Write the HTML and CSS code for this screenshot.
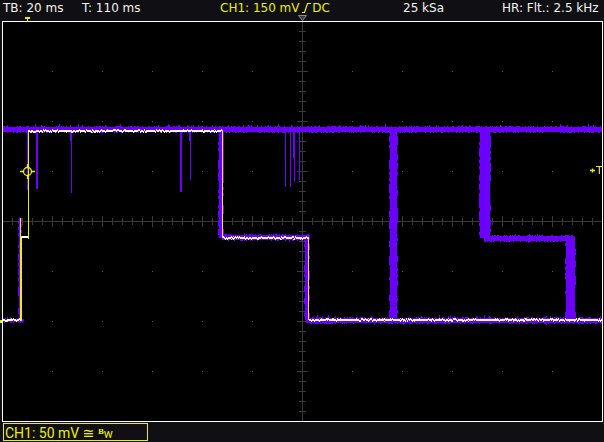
FILE: index.html
```html
<!DOCTYPE html>
<html lang="en">
<head>
    <meta charset="UTF-8">
    <title>Scope</title>
    <link rel="stylesheet" href="styles.css">
</head>
<body>
    <div class="screen">
        <div class="topbar">
            <span>TB: 20 ms</span>
            <span>T: 110 ms</span>
            <span class="ch">CH1: 150 mV <svg class="edge" width="9" height="10" viewBox="0 0 9 10"><polyline points="0,9.5 2.5,9.5 5.5,0.5 9,0.5" fill="none" stroke="#eeee00" stroke-width="1.2"/></svg>DC</span>
            <span>25 kSa</span>
            <span>HR: Flt.: 2.5 kHz</span>
        </div>

        <!-- trigger position and screen centre markers -->
        <svg class="mark-tpos" width="6" height="5" viewBox="0 0 6 5"><path d="M0 0h5v2h-2v3h-1v-3h-2z" fill="#eeee00"/></svg>
        <svg class="mark-center" width="9" height="6" viewBox="0 0 9 6"><path d="M0.5 0.5h8l-4 5z" fill="#3c3c3c" stroke="#8a8a8a"/></svg>

        <div class="graticule">
            <canvas id="scope" width="599" height="399"></canvas>
        </div>

        <!-- trigger level crosshair, trigger marker, ground marker -->
        <svg class="mark-level" width="17" height="17" viewBox="0 0 17 17">
            <circle cx="8.5" cy="8.5" r="4" fill="none" stroke="#eeee00" stroke-width="1.3"/>
            <path d="M1 8.5h3.5M12.5 8.5h3.5M8.5 1v3.5M8.5 12.5v3.5" stroke="#eeee00" stroke-width="1.3"/>
        </svg>
        <div class="mark-trig"><svg width="5" height="5" viewBox="0 0 5 5"><path d="M0 2.5h5M2.5 0.5v4" stroke="#eeee00" stroke-width="1.4"/></svg>T</div>
        <div class="mark-gnd"></div>

        <div class="bottombar">
            <div class="chbox">CH1: 50 mV &#8773; <span class="bw"><sup>B</sup>w</span></div>
        </div>
    </div>

    <script src="script.js"></script>
</body>
</html>
```

FILE: styles.css
```css
body {
    margin: 0;
    background: #100f13;
    font-family: "DejaVu Sans", sans-serif;
}
.screen {
    position: relative;
    width: 604px;
    height: 442px;
    background: #100f13;
}
.topbar {
    display: grid;
    grid-template-columns: 79px 138px 183px 99px 1fr;
    height: 21px;
    box-sizing: border-box;
    padding: 1px 0 0 3px;
    font-size: 12px;
    line-height: 14px;
    color: #f2f2f2;
    white-space: nowrap;
}
.ch {
    color: #eeee00;
}
.edge {
    vertical-align: -1px;
    margin-left: -1px;
    margin-right: 1px;
}
.graticule {
    width: 601px;
    height: 401px;
    margin-left: 2px;
    box-sizing: border-box;
    border: 1px solid #ffffff;
    background: #000;
}
#scope {
    display: block;
}
.bottombar {
    height: 21px;
    box-sizing: border-box;
    padding: 1px 0 0 3px;
}
.chbox {
    width: 145px;
    height: 18px;
    box-sizing: border-box;
    border: 1px solid #eeee00;
    padding-left: 1px;
    font-family: Roboto, "DejaVu Sans", sans-serif;
    font-size: 14px;
    line-height: 16px;
    color: #eeee00;
    white-space: nowrap;
}
.bw sup {
    font-family: "DejaVu Serif", serif;
    font-weight: bold;
    font-size: 7px;
    vertical-align: 4px;
}
.bw {
    font-size: 12px;
}

/* markers drawn over the graticule */
.mark-tpos {
    position: absolute;
    left: 25px;
    top: 17px;
}
.mark-center {
    position: absolute;
    left: 298px;
    top: 15px;
}
.mark-level {
    position: absolute;
    left: 19px;
    top: 163px;
}
.mark-trig {
    position: absolute;
    left: 590px;
    top: 164px;
    display: flex;
    align-items: center;
    gap: 1px;
    font-size: 11px;
    line-height: 13px;
    color: #eeee00;
}
.mark-gnd {
    position: absolute;
    left: 0;
    top: 320px;
    width: 2px;
    height: 3px;
    background: #eeee00;
}
```

FILE: script.js
```js
const cv = document.getElementById('scope');
const ctx = cv.getContext('2d');
// work in screen coordinates; the canvas sits inside the 1px frame at (3, 22)
ctx.translate(-3, -22);

const PURPLE = '#6c00ff';
const WHITE = '#ffffff';
const YELLOW = '#eeee00';

let seed = 12345;
function rnd() {
    seed = (seed * 16807) % 2147483647;
    return seed / 2147483647;
}

function grid() {
    ctx.fillStyle = '#5a5a5a';
    for (let x = 52; x < 602; x += 50)
        for (let y = 71; y < 421; y += 50) ctx.fillRect(x, y, 1, 1);

    ctx.fillStyle = '#3a3a3a';
    ctx.fillRect(3, 221, 599, 1);
    ctx.fillRect(302, 22, 1, 399);
    for (let x = 12; x < 602; x += 10) {
        const h = (x - 2) % 50 ? 3 : 5;
        ctx.fillRect(x, 221 - h, 1, 2 * h + 1);
    }
    for (let y = 31; y < 421; y += 10) {
        const h = (y - 21) % 50 ? 3 : 5;
        ctx.fillRect(302 - h, y, 2 * h + 1, 1);
    }
}

// noisy horizontal persistence band
function band(x0, x1, y, h) {
    ctx.fillStyle = PURPLE;
    for (let x = x0; x < x1; x++) {
        const up = (rnd() < 0.3 ? 1 : 0) + (rnd() < 0.05 ? 2 : 0);
        const dn = (rnd() < 0.3 ? 1 : 0) + (rnd() < 0.03 ? 1 : 0);
        ctx.fillRect(x, y - h - up, 1, 2 * h + 1 + up + dn);
    }
}

// vertical persistence bar with ragged edges
function vbar(x, w, y0, y1) {
    ctx.fillStyle = PURPLE;
    ctx.fillRect(x, y0, w, y1 - y0);
    for (let y = y0; y < y1; y += 3) {
        if (rnd() < 0.4) ctx.fillRect(x - 1, y, 1, 3);
        if (rnd() < 0.4) ctx.fillRect(x + w, y, 1, 3);
    }
}

// current acquisition: yellow underneath, white over it
function trace(x0, x1, y) {
    for (let x = x0; x < x1; x++) {
        if (rnd() < 0.12) {
            ctx.fillStyle = YELLOW;
            ctx.fillRect(x, y + (rnd() < 0.5 ? -1 : 2), 1, 1);
        }
        const o = rnd() < 0.25 ? (rnd() < 0.5 ? -1 : 1) : 0;
        ctx.fillStyle = WHITE;
        ctx.fillRect(x, y + o, 1, 2);
    }
}

function vline(x, y0, y1, color) {
    ctx.fillStyle = color;
    ctx.fillRect(x, y0, 1, y1 - y0);
}

grid();

// persistence
band(3, 602, 129, 2);
band(222, 310, 237, 2);
band(3, 24, 320, 1);
band(306, 602, 320, 2);
band(484, 574, 238, 2);

vbar(19, 2, 218, 321);
vbar(219, 4, 130, 238);
vbar(305, 4, 238, 320);
vbar(390, 7, 127, 319);
vbar(480, 10, 127, 238);
vbar(566, 9, 237, 319);

// glitch spikes off the top level
[[27, 1, 190], [36, 2, 189], [71, 1, 193], [180, 2, 192], [190, 1, 180],
 [223, 1, 183], [285, 1, 187], [290, 1, 187], [294, 1, 182], [299, 1, 180]]
    .forEach(([x, w, y]) => {
        ctx.fillStyle = PURPLE;
        ctx.fillRect(x, 130, w, y - 130);
    });
ctx.fillRect(70, 130, 2, 11);
ctx.fillRect(189, 130, 2, 11);
ctx.fillRect(293, 130, 2, 28);

// live trace
vline(20, 218, 321, YELLOW);
vline(21, 236, 321, YELLOW);
vline(28, 130, 239, YELLOW);
vline(222, 130, 238, YELLOW);
vline(308, 238, 320, YELLOW);

trace(3, 21, 319);
trace(21, 28, 236);
trace(28, 222, 130);
trace(223, 309, 237);
trace(309, 602, 319);
```
